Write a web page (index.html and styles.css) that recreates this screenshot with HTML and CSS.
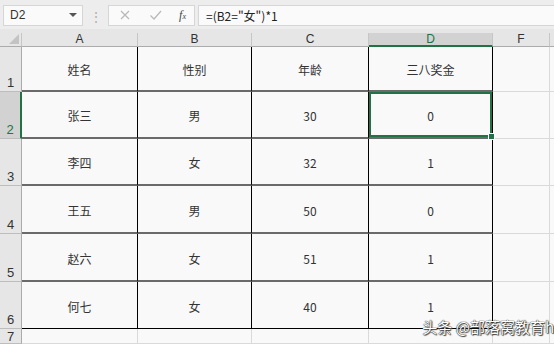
FILE: index.html
```html
<!DOCTYPE html>
<html lang="zh-CN">

<head>
    <meta charset="UTF-8">
    <meta name="viewport" content="width=device-width, initial-scale=1.0">
    <title>三八奖金</title>
    <link rel="stylesheet" href="styles.css">
</head>

<body>
    <div class="toolbar">
        <div class="name_box">
            <span>D2</span>
            <svg width="8" height="5" viewBox="0 0 8 5"><path d="M0 0h8L4 4z" fill="#555"/></svg>
        </div>
        <div class="dots">⋮</div>
        <div class="btns">
            <svg width="12" height="12" viewBox="0 0 12 12"><path d="M2 2l8 8M10 2l-8 8" stroke="#b8b8b8" stroke-width="1.2"/></svg>
            <svg width="13" height="12" viewBox="0 0 13 12"><path d="M1.5 6.5l3.5 3.5 7-8" stroke="#b8b8b8" stroke-width="1.2" fill="none"/></svg>
            <span class="fx">f<sub>x</sub></span>
        </div>
        <div class="formula">=(B2="女")*1</div>
    </div>
    <div class="gap"></div>
    <div class="sheet">
        <div class="corner"><svg width="10" height="10" viewBox="0 0 10 10"><path d="M10 0v10H0z" fill="#c3c3c3"/></svg></div>
        <div class="col_head">A</div>
        <div class="col_head">B</div>
        <div class="col_head">C</div>
        <div class="col_head active">D</div>
        <div class="col_head">F</div>
        <div class="col_head last"></div>

        <div class="row_head">1</div>
        <div class="cell">姓名</div>
        <div class="cell">性别</div>
        <div class="cell">年龄</div>
        <div class="cell">三八奖金</div>
        <div class="grid"></div>
        <div class="grid last"></div>

        <div class="row_head active">2</div>
        <div class="cell">张三</div>
        <div class="cell">男</div>
        <div class="cell">30</div>
        <div class="cell selected">0</div>
        <div class="grid"></div>
        <div class="grid last"></div>

        <div class="row_head">3</div>
        <div class="cell">李四</div>
        <div class="cell">女</div>
        <div class="cell">32</div>
        <div class="cell">1</div>
        <div class="grid"></div>
        <div class="grid last"></div>

        <div class="row_head">4</div>
        <div class="cell">王五</div>
        <div class="cell">男</div>
        <div class="cell">50</div>
        <div class="cell">0</div>
        <div class="grid"></div>
        <div class="grid last"></div>

        <div class="row_head">5</div>
        <div class="cell">赵六</div>
        <div class="cell">女</div>
        <div class="cell">51</div>
        <div class="cell">1</div>
        <div class="grid"></div>
        <div class="grid last"></div>

        <div class="row_head">6</div>
        <div class="cell bottom">何七</div>
        <div class="cell bottom">女</div>
        <div class="cell bottom">40</div>
        <div class="cell bottom">1</div>
        <div class="grid"></div>
        <div class="grid last"></div>

        <div class="row_head short">7</div>
        <div class="grid"></div>
        <div class="grid"></div>
        <div class="grid"></div>
        <div class="grid"></div>
        <div class="grid"></div>
        <div class="grid last"></div>
    </div>
    <div class="watermark">头条 @部落窝教育h</div>
</body>

</html>
```

FILE: styles.css
```css
* {
    margin: 0;
    padding: 0;
    box-sizing: border-box;
}

body {
    position: relative;
    width: 554px;
    height: 344px;
    overflow: hidden;
    background-color: #f7f7f7;
    font-family: "Noto Sans CJK SC", "Liberation Sans", sans-serif;
    font-size: 12px;
    color: #333;
}

.toolbar {
    display: flex;
    align-items: center;
    height: 29px;
    padding: 4px 0 3px 3px;
    background-color: #ededed;
}

.name_box {
    display: flex;
    align-items: center;
    justify-content: space-between;
    width: 80px;
    height: 21px;
    padding: 0 5px 0 6px;
    background-color: #fafafa;
    border: 1px solid #d6d6d6;
    font-family: "Liberation Sans", sans-serif;
    font-size: 12px;
    color: #333;
}

.dots {
    width: 25px;
    text-align: center;
    color: #aaa;
    font-size: 12px;
}

.btns {
    display: flex;
    align-items: center;
    justify-content: space-between;
    width: 87px;
    height: 21px;
    padding: 0 8px 0 10px;
    background-color: #fafafa;
    border: 1px solid #d6d6d6;
}

.btns .fx {
    font-family: "Liberation Serif", serif;
    font-style: italic;
    font-size: 12px;
    color: #444;
}

.btns .fx sub {
    font-size: 8px;
    vertical-align: 0;
}

.formula {
    flex: 1;
    height: 21px;
    margin-left: 3px;
    padding-left: 7px;
    line-height: 19px;
    background-color: #fafafa;
    border: 1px solid #d6d6d6;
    border-right: none;
    font-size: 12px;
    color: #222;
}

.gap {
    height: 4px;
    background-color: #e6e6e6;
}

.sheet {
    display: grid;
    grid-template-columns: 22px 116px 114px 117px 124px 57px 1fr;
    grid-template-rows: 14px 45px 47px 47px 48px 48px 47px 15px;
}

.corner {
    display: flex;
    align-items: flex-end;
    justify-content: flex-end;
    padding: 0 2px 2px 0;
    background-color: #e6e6e6;
    border-right: 1px solid #c6c6c6;
    border-bottom: 1px solid #ababab;
}

.col_head {
    text-align: center;
    line-height: 13px;
    background-color: #e6e6e6;
    border-right: 1px solid #c6c6c6;
    border-bottom: 1px solid #ababab;
    font-family: "Liberation Sans", sans-serif;
    font-size: 12px;
    color: #333;
}

.col_head.active {
    background-color: #d2d2d2;
    border-bottom: 2px solid #217346;
    color: #217346;
}

.col_head.last {
    border-right: none;
}

.row_head {
    display: flex;
    align-items: flex-end;
    justify-content: center;
    padding-bottom: 1px;
    background-color: #e6e6e6;
    border-right: 1px solid #ababab;
    border-bottom: 1px solid #bdbdbd;
    font-family: "Liberation Sans", sans-serif;
    font-size: 13px;
    color: #333;
}

.row_head.short {
    line-height: 13px;
    padding-bottom: 0;
}

.row_head.active {
    background-color: #d2d2d2;
    border-right: 2px solid #217346;
    color: #217346;
}

.cell {
    display: flex;
    align-items: center;
    justify-content: center;
    padding-top: 2px;
    background-color: #f9f9f9;
    border-right: 1.5px solid #000;
    border-bottom: 2px solid #6a6a6a;
    font-size: 12px;
    color: #333;
}

.cell.bottom {
    border-bottom: 1.5px solid #000;
}

.cell.selected {
    position: relative;
    box-shadow: inset 0 0 0 2px #217346;
}

.cell.selected::after {
    content: "";
    position: absolute;
    right: -3px;
    bottom: -3px;
    width: 5px;
    height: 5px;
    background-color: #217346;
    border: 1px solid #fff;
}

.grid {
    background-color: #f9f9f9;
    border-right: 1px solid #dadada;
    border-bottom: 1px solid #dadada;
}

.grid.last {
    border-right: none;
}

.watermark {
    position: absolute;
    right: 0;
    bottom: 7px;
    font-size: 15px;
    color: #fff;
    text-shadow: 0 0 1px #222, 0 0 1px #222, 1px 1px 1px #444;
}
```
